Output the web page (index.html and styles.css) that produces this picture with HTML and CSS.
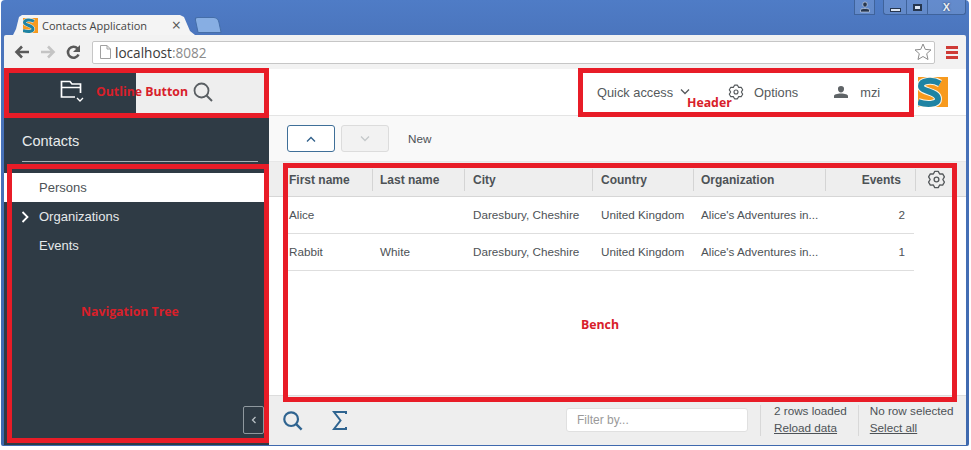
FILE: index.html
```html
<!DOCTYPE html>
<html lang="en">
<head>
    <meta charset="UTF-8">
    <meta name="viewport" content="width=device-width, initial-scale=1.0">
    <title>Contacts Application</title>
    <link rel="stylesheet" href="styles.css">
</head>
<body>
    <svg class="defs" width="0" height="0">
        <symbol id="logo" viewBox="0 0 30 30">
            <rect width="30" height="30" fill="#f79a1e"/>
            <path d="M22 6.500C14 2 3 3.500 3 9c0 6 17 5 17 13 0 6-12 6-20 3" fill="none" stroke="#fdf3e2" stroke-width="8"/>
            <path d="M22 6.500C14 2 3 3.500 3 9c0 6 17 5 17 13 0 6-12 6-20 3" fill="none" stroke="#1f83a3" stroke-width="6"/>
        </symbol>
        <symbol id="gear" viewBox="0 0 24 24">
            <path d="M9.820 1.730H14.180L16 5.070 19.800 4.970 21.990 8.760 20 12 21.990 15.240 19.800 19.030 16 18.930 14.180 22.270H9.820L8 18.930 4.200 19.030 2.010 15.240 4 12 2.010 8.760 4.200 4.970 8 5.070z" fill="none" stroke="#55595c" stroke-width="1.700" stroke-linejoin="round"/>
            <circle cx="12" cy="12" r="3" fill="none" stroke="#55595c" stroke-width="1.700"/>
        </symbol>
    </svg>

    <div class="window">
        <div class="tabstrip">
            <div class="tab">
                <svg class="favicon" width="15" height="15"><use href="#logo"/></svg>
                <span class="tab-title">Contacts Application</span>
                <span class="tab-close">×</span>
            </div>
            <div class="new-tab"></div>
            <div class="win-controls">
                <div class="win-btn profile">
                    <svg width="12" height="12" viewBox="0 0 12 12"><path d="M6 1a2.200 2.200 0 0 1 2.200 2.400c0 1.400-1 2.600-2.200 2.600S3.800 4.800 3.800 3.400A2.200 2.200 0 0 1 6 1zM1.500 11V9c0-1 2-1.500 4.500-1.500s4.500.5 4.500 1.500v2z" fill="#26364f" stroke="#dfe8f5" stroke-width=".6"/></svg>
                </div>
                <div class="win-group">
                    <div class="win-btn min"><span class="min-glyph"></span></div>
                    <div class="win-btn max"><span class="max-glyph"></span></div>
                    <div class="win-btn close">X</div>
                </div>
            </div>
        </div>

        <div class="browserbar">
            <svg class="nav-icon" width="16" height="14" viewBox="0 0 16 14"><path d="M15 7H3M8 1.500 2.500 7 8 12.500" fill="none" stroke="#5a5a5a" stroke-width="2.600"/></svg>
            <svg class="nav-icon" width="16" height="14" viewBox="0 0 16 14"><path d="M1 7h12M8 1.500 13.500 7 8 12.500" fill="none" stroke="#c4c4c4" stroke-width="2.600"/></svg>
            <svg class="nav-icon" width="15" height="15" viewBox="0 0 15 15"><path d="M12.500 9.500A5.500 5.500 0 1 1 11.500 3.500" fill="none" stroke="#5a5a5a" stroke-width="2.600"/><path d="M14 0v7H7z" fill="#5a5a5a"/></svg>
            <div class="omnibox">
                <svg class="page-icon" width="11" height="14" viewBox="0 0 11 14"><path d="M.5.500h6.500l3.500 3.500v9.500H.5zM7 .5V4h3.500" fill="none" stroke="#a0a0a0"/></svg>
                <span class="host">localhost<span class="port">:8082</span></span>
                <svg class="star" width="18" height="18" viewBox="0 0 18 18"><path d="M9 1l2.300 5.400 5.700.5-4.300 3.800 1.300 5.800L9 13.500l-5 3 1.300-5.800L1 6.900l5.700-.5z" fill="#fff" stroke="#8c8c8c"/></svg>
            </div>
            <div class="menu-icon"><span></span><span></span><span></span></div>
        </div>

        <div class="app">
            <aside class="sidebar">
                <div class="outline-switch">
                    <div class="outline-btn active">
                        <svg width="26" height="24" viewBox="0 0 26 24"><path d="M15 17H1.500V1.500H10l2 2.500h8.500v9M1.500 7.500h19" fill="none" stroke="#fff" stroke-width="1.700"/><path d="M17 18l3 3 3-3" fill="none" stroke="#fff" stroke-width="1.300"/></svg>
                    </div>
                    <div class="outline-btn search">
                        <svg width="20" height="20" viewBox="0 0 20 20"><circle cx="8.500" cy="8.500" r="7" fill="none" stroke="#5a5f63" stroke-width="1.800"/><path d="M13.500 13.500 19 19" stroke="#5a5f63" stroke-width="2"/></svg>
                    </div>
                </div>
                <div class="outline-title">Contacts</div>
                <ul class="tree">
                    <li class="tree-node selected">Persons</li>
                    <li class="tree-node">
                        <svg class="expander" width="8" height="12" viewBox="0 0 8 12"><path d="M1.500 1 6.500 6l-5 5" fill="none" stroke="#fff" stroke-width="1.800"/></svg>
                        Organizations
                    </li>
                    <li class="tree-node">Events</li>
                </ul>
                <div class="collapse-row">
                    <div class="collapse-btn">
                        <svg width="6" height="8" viewBox="0 0 6 8"><path d="M4.500 1 1.500 4l3 3" fill="none" stroke="#b9c0c5" stroke-width="1.300"/></svg>
                    </div>
                </div>
            </aside>

            <main class="main">
                <header class="header">
                    <div class="header-item">Quick access
                        <svg class="caret" width="10" height="6" viewBox="0 0 10 6"><path d="M1 .5 5 4.500 9 .5" fill="none" stroke="#55595c" stroke-width="1.300"/></svg>
                    </div>
                    <div class="header-item options">
                        <svg width="16" height="16"><use href="#gear"/></svg>
                        Options
                    </div>
                    <div class="header-item user">
                        <svg width="14" height="12" viewBox="0 0 14 12"><path d="M7 0a3 3 0 0 1 3 3.200C10 5 8.700 6.500 7 6.500S4 5 4 3.200A3 3 0 0 1 7 0zM0 12v-2c0-1.500 3-2.500 7-2.500s7 1 7 2.500v2z" fill="#5f6467"/></svg>
                        mzi
                    </div>
                    <svg class="app-logo" width="30" height="30"><use href="#logo"/></svg>
                </header>

                <div class="toolbar">
                    <button class="nav-btn current">
                        <svg width="10" height="6" viewBox="0 0 10 6"><path d="M1 5.500 5 1.500l4 4" fill="none" stroke="#2f5f8a" stroke-width="1.300"/></svg>
                    </button>
                    <button class="nav-btn disabled">
                        <svg width="10" height="6" viewBox="0 0 10 6"><path d="M1 .5 5 4.500 9 .5" fill="none" stroke="#c4c8ca" stroke-width="1.300"/></svg>
                    </button>
                    <span class="tool-label">New</span>
                </div>

                <div class="bench">
                    <div class="row head">
                        <div class="cell c1">First name</div>
                        <div class="cell c2">Last name</div>
                        <div class="cell c3">City</div>
                        <div class="cell c4">Country</div>
                        <div class="cell c5">Organization</div>
                        <div class="cell c6">Events</div>
                        <div class="cell c7"><svg width="19" height="19"><use href="#gear"/></svg></div>
                    </div>
                    <div class="row">
                        <div class="cell c1">Alice</div>
                        <div class="cell c2"></div>
                        <div class="cell c3">Daresbury, Cheshire</div>
                        <div class="cell c4">United Kingdom</div>
                        <div class="cell c5">Alice's Adventures in...</div>
                        <div class="cell c6">2</div>
                    </div>
                    <div class="row">
                        <div class="cell c1">Rabbit</div>
                        <div class="cell c2">White</div>
                        <div class="cell c3">Daresbury, Cheshire</div>
                        <div class="cell c4">United Kingdom</div>
                        <div class="cell c5">Alice's Adventures in...</div>
                        <div class="cell c6">1</div>
                    </div>
                </div>

                <footer class="footer">
                    <svg class="foot-icon" width="21" height="21" viewBox="0 0 23 23"><circle cx="10" cy="10" r="7.500" fill="none" stroke="#2f6490" stroke-width="2.400"/><path d="M15.500 15.500 21.500 21.500" stroke="#2f6490" stroke-width="2.600"/></svg>
                    <svg class="foot-icon sigma" width="15" height="21" viewBox="0 0 15 21"><path d="M14 4V2H2l6.500 8.500L2 19h12v-2" fill="none" stroke="#2f6490" stroke-width="2"/></svg>
                    <input class="filter" type="text" placeholder="Filter by...">
                    <div class="status first">
                        <span>2 rows loaded</span>
                        <a>Reload data</a>
                    </div>
                    <div class="status">
                        <span>No row selected</span>
                        <a>Select all</a>
                    </div>
                </footer>
            </main>
        </div>

        <!-- annotations on top of the screenshot -->
        <div class="mark mark-outline"></div>
        <div class="mark mark-header"></div>
        <div class="mark mark-tree"></div>
        <div class="mark mark-bench"></div>
        <span class="mark-label label-outline">Outline Button</span>
        <span class="mark-label label-header">Header</span>
        <span class="mark-label label-tree">Navigation Tree</span>
        <span class="mark-label label-bench">Bench</span>
    </div>
</body>
</html>
```

FILE: styles.css
```css
/* Page and browser window */
html, body {
    margin: 0;
    padding: 0;
    background: #fff;
}
.defs {
    position: absolute;
}
.window {
    position: relative;
    width: 968px;
    height: 446px;
    box-sizing: border-box;
    margin-left: 1px;
    padding: 0 3px 1px 3px;
    display: flex;
    flex-direction: column;
    overflow: hidden;
    background: linear-gradient(#4f7cc6 0, #4a74bc 40px, #3f69ae 100%);
    border-radius: 4px 4px 2px 2px;
    font-family: "Liberation Sans", Arial, sans-serif;
    font-size: 12px;
    color: #4d5256;
}

/* Tab strip */
.tabstrip {
    height: 35px;
    display: flex;
    align-items: flex-end;
    padding-left: 9px;
    flex-shrink: 0;
}
.tab {
    width: 182px;
    height: 20px;
    padding: 0 14px 0 10px;
    box-sizing: border-box;
    display: flex;
    align-items: center;
    background: #f4f4f4;
    clip-path: polygon(0 100%, 3px 70%, 6px 10%, 9px 0, calc(100% - 15px) 0, calc(100% - 11px) 10%, calc(100% - 5px) 80%, 100% 100%);
    font-family: "Open Sans", sans-serif;
    font-size: 11px;
    color: #444;
}
.favicon {
    margin-right: 4px;
    flex-shrink: 0;
}
.tab-title {
    flex: 1;
}
.tab-close {
    font-size: 16px;
    line-height: 16px;
    color: #555;
}
.new-tab {
    width: 22px;
    height: 14px;
    margin: 0 0 2px 1px;
    background: #87aee3;
    border: 1px solid #456ea8;
    border-radius: 3px 5px 1px 1px;
    transform: skewX(12deg);
}
.win-controls {
    margin-left: auto;
    align-self: flex-start;
    display: flex;
    gap: 8px;
}
.win-group {
    display: flex;
}
.win-btn {
    width: 21px;
    height: 15px;
    display: flex;
    align-items: center;
    justify-content: center;
    background: rgba(255, 255, 255, 0.12);
    border: 1px solid #3f639b;
    border-top: none;
    box-sizing: border-box;
    color: #26364f;
    font-size: 10px;
}
.win-btn.min {
    width: 23px;
    border-right: none;
    border-radius: 0 0 0 3px;
}
.win-btn.max {
    border-right: none;
}
.win-btn.close {
    width: 39px;
    font-size: 11px;
    font-weight: bold;
    color: #e8eef6;
    text-shadow: 0 0 2px #26364f;
    border-radius: 0 0 3px 0;
}
.min-glyph {
    width: 9px;
    height: 2px;
    margin-top: 5px;
    border: 1px solid #26364f;
    background: #dde6f3;
}
.max-glyph {
    width: 5px;
    height: 3px;
    border: 2px solid #26364f;
    background: #dde6f3;
}

/* Browser toolbar */
.browserbar {
    height: 34px;
    display: flex;
    align-items: center;
    padding-left: 10px;
    flex-shrink: 0;
    background: #f2f2f2;
    border-radius: 2px 2px 0 0;
}
.nav-icon {
    margin-right: 10px;
}
.omnibox {
    width: 843px;
    height: 23px;
    margin-left: 1px;
    padding: 0 2px 0 7px;
    box-sizing: border-box;
    display: flex;
    align-items: center;
    background: #fff;
    border: 1px solid #c6c6c6;
    border-radius: 2px;
}
.page-icon {
    margin-right: 4px;
}
.host {
    flex: 1;
    font-family: "Open Sans", sans-serif;
    font-size: 13.600px;
    color: #3a3a3a;
}
.port {
    color: #8b8b8b;
}
.menu-icon {
    width: 12px;
    margin-left: 11px;
    display: flex;
    flex-direction: column;
    gap: 2px;
}
.menu-icon span {
    height: 3px;
    background: #cf3b36;
}

/* App */
.app {
    flex: 1;
    min-height: 0;
    display: flex;
    background: #fff;
}
.sidebar {
    width: 265px;
    flex-shrink: 0;
    display: flex;
    flex-direction: column;
    background: #2f3b45;
    color: #fff;
}
.outline-switch {
    height: 47px;
    display: flex;
    flex-shrink: 0;
    margin-right: 3px;
    background: #eee;
}
.outline-btn {
    flex: 1;
    display: flex;
    align-items: center;
    justify-content: center;
}
.outline-btn.active {
    flex: 0 0 132px;
    padding-left: 5px;
    padding-bottom: 2px;
    box-sizing: border-box;
    background: #2f3b45;
}
.outline-btn.search {
    padding-left: 4px;
    padding-bottom: 1px;
}
.outline-title {
    height: 45px;
    margin: 0 11px 0 18px;
    line-height: 51px;
    font-size: 14.500px;
    color: #e8ebec;
    border-bottom: 1px solid #a7b0b5;
}
.tree {
    list-style: none;
    margin: 0;
    padding: 11px 0 0;
    font-size: 13px;
    flex: 1;
}
.tree-node {
    position: relative;
    height: 29px;
    line-height: 29px;
    padding-left: 35px;
    color: #e6e9ea;
}
.tree-node.selected {
    background: #fff;
    color: #4d5256;
}
.expander {
    position: absolute;
    left: 17px;
    top: 9px;
}
.collapse-row {
    display: flex;
    justify-content: flex-end;
    padding: 0 5px 11px 0;
}
.collapse-btn {
    width: 21px;
    height: 28px;
    display: flex;
    align-items: center;
    justify-content: center;
    border: 1px solid #8f989e;
    border-radius: 2px;
    box-sizing: border-box;
}

.main {
    flex: 1;
    min-width: 0;
    display: flex;
    flex-direction: column;
}
.header {
    height: 47px;
    box-sizing: border-box;
    flex-shrink: 0;
    display: flex;
    align-items: center;
    padding-left: 328px;
    border-bottom: 1px solid #e4e4e4;
    font-size: 12.800px;
}
.header-item {
    display: flex;
    align-items: center;
    color: #55595c;
}
.caret {
    margin-left: 7px;
}
.options {
    margin-left: 38px;
    gap: 10px;
}
.user {
    margin-left: 36px;
    gap: 12px;
}
.app-logo {
    margin-left: 38px;
}
.toolbar {
    height: 46px;
    box-sizing: border-box;
    flex-shrink: 0;
    display: flex;
    align-items: center;
    padding-left: 18px;
    gap: 6px;
    background: #f9f9f9;
    border-bottom: 1px solid #e7e7e7;
}
.nav-btn {
    width: 48px;
    height: 27px;
    padding: 0;
    display: flex;
    align-items: center;
    justify-content: center;
    background: #fff;
    border: 1px solid #3f6f98;
    border-radius: 3px;
}
.nav-btn.disabled {
    background: #f2f2f2;
    border-color: #dcdcdc;
}
.tool-label {
    margin-left: 13px;
    font-size: 11.700px;
}

/* Table */
.bench {
    flex: 1;
    min-height: 0;
    background: #fff;
    border-bottom: 1px solid #ddd;
}
.row {
    width: 629px;
    height: 37px;
    display: flex;
    align-items: center;
    border-bottom: 1px solid #dedede;
    box-sizing: border-box;
    margin-left: 16px;
    font-size: 11.700px;
}
.row.head {
    width: auto;
    height: 35px;
    margin-left: 0;
    padding-left: 16px;
    padding-top: 1px;
    background: #eee;
    border-bottom: 1px solid #d6d6d6;
    font-size: 12px;
    font-weight: bold;
}
.cell {
    box-sizing: border-box;
    padding-left: 4px;
    height: 22px;
    line-height: 22px;
    white-space: nowrap;
}
.head .cell {
    border-right: 1px solid #d4d4d4;
}
.c1 { width: 88px; }
.c2 { width: 92px; padding-left: 7px; }
.c3 { width: 128px; padding-left: 8px; }
.c4 { width: 101px; padding-left: 8px; }
.c5 { width: 132px; padding-left: 7px; }
.c6 { width: 88px; text-align: right; padding-right: 9px; }
.head .c6 { width: 90px; padding-right: 14px; }
.head .c7 {
    width: 40px;
    padding-left: 0;
    display: flex;
    justify-content: center;
    align-items: center;
    border-right: none;
}

/* Table status bar */
.footer {
    height: 49px;
    flex-shrink: 0;
    box-sizing: border-box;
    display: flex;
    align-items: center;
    padding-left: 13px;
    background: #eee;
}
.sigma {
    margin-left: 29px;
}
.filter {
    width: 182px;
    height: 24px;
    box-sizing: border-box;
    margin: -2px 0 0 219px;
    padding: 0 10px;
    background: #fff;
    border: 1px solid #e0e0e0;
    border-radius: 3px;
    font-family: inherit;
    font-size: 12px;
}
.filter::placeholder {
    color: #9a9a9a;
}
.status {
    height: 31px;
    margin-left: 11px;
    padding-left: 11px;
    display: flex;
    flex-direction: column;
    line-height: 17px;
    border-left: 1px solid #d8d8d8;
    font-size: 11.700px;
    white-space: nowrap;
}
.status span {
    margin-top: -3px;
}
.status.first {
    margin-left: 12px;
    padding-left: 13px;
}
.status a {
    text-decoration: underline;
}

/* Red annotations */
.mark {
    position: absolute;
    box-sizing: border-box;
    border: 5px solid #e81c27;
}
.mark-outline { left: 3px; top: 68px; width: 265px; height: 50px; }
.mark-header { left: 577px; top: 68px; width: 336px; height: 49px; }
.mark-tree { left: 6px; top: 164px; width: 262px; height: 279px; }
.mark-bench { left: 282px; top: 163px; width: 674px; height: 239px; }
.mark-label {
    position: absolute;
    font-family: "Open Sans", sans-serif;
    font-size: 12.300px;
    font-weight: 700;
    color: #d8202a;
    white-space: nowrap;
}
.label-outline { left: 95px; top: 83px; }
.label-header { left: 686px; top: 94px; }
.label-tree { left: 80px; top: 303px; }
.label-bench { left: 580px; top: 316px; }
```
